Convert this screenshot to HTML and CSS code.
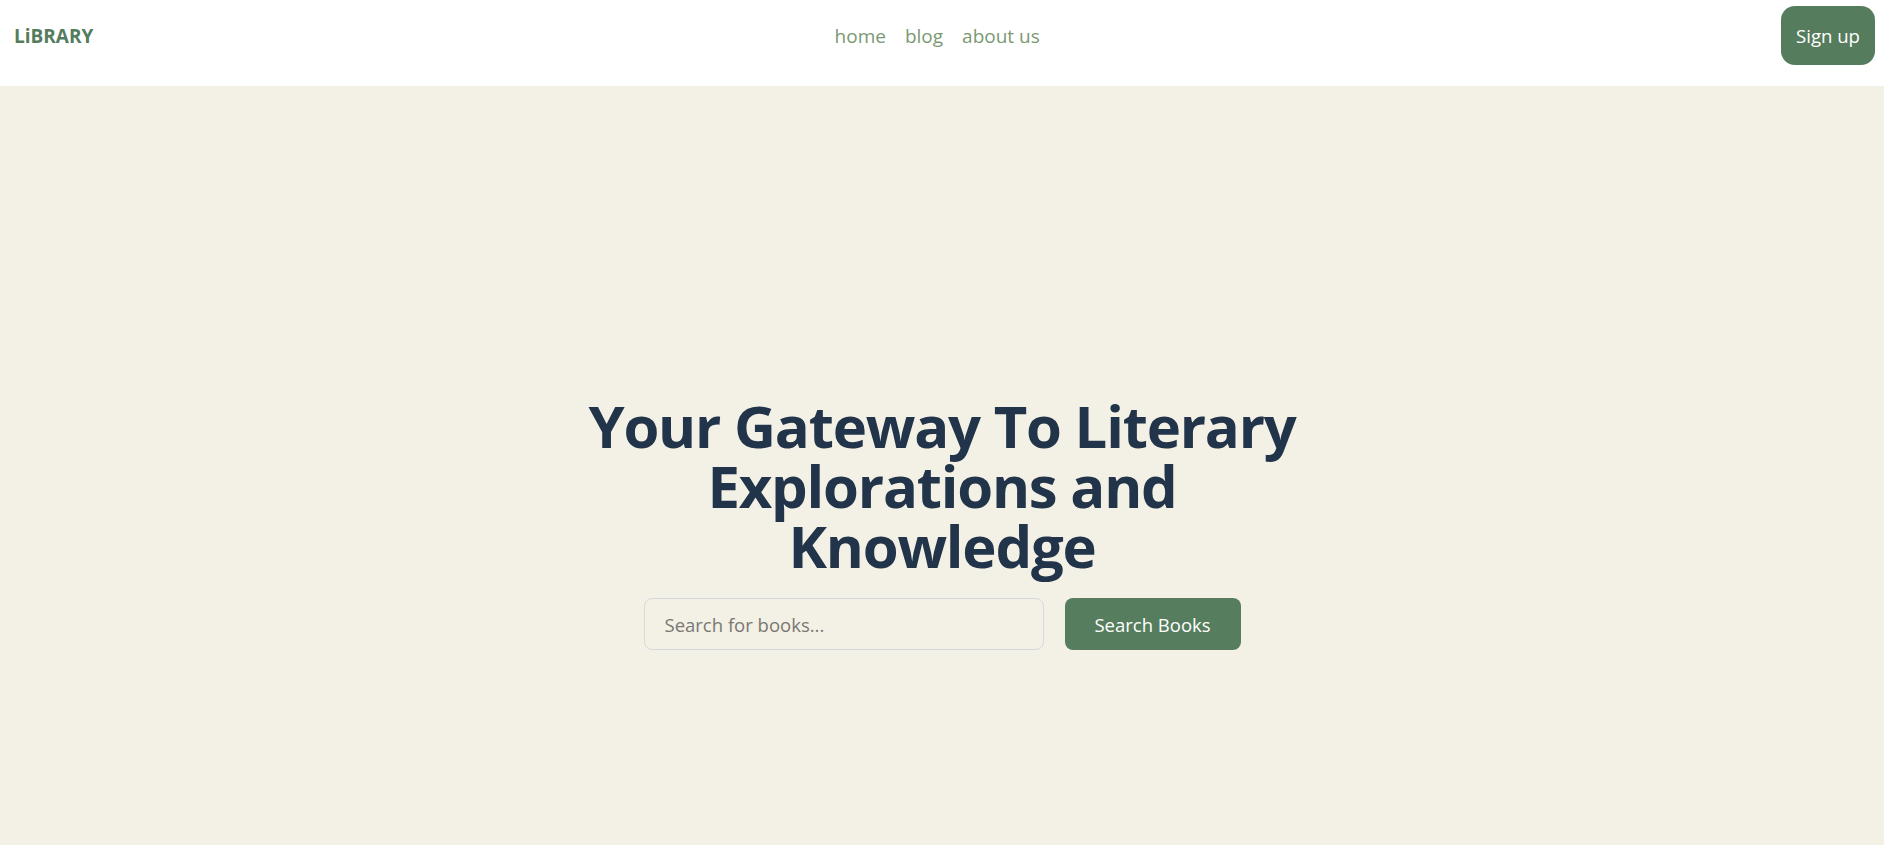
FILE: index.html
```html
<!DOCTYPE html>
<html lang="en">
<head>
<meta charset="utf-8">
<title>Library</title>
<link rel="stylesheet" href="styles.css">
</head>
<body>
  <header class="site-header">
    <a class="logo" href="#">LiBRARY</a>
    <nav class="main-nav">
      <a href="#">home</a>
      <a href="#">blog</a>
      <a href="#">about us</a>
    </nav>
    <button class="signup-btn" type="button">Sign up</button>
  </header>
  <main class="hero">
    <h1 class="hero-title">Your Gateway To Literary Explorations and Knowledge</h1>
    <form class="search-form" onsubmit="return false;">
      <input class="search-input" type="text" placeholder="Search for books...">
      <button class="search-btn" type="submit">Search Books</button>
    </form>
  </main>
</body>
</html>
```

FILE: styles.css
```css
* {
  box-sizing: border-box;
}

html, body {
  margin: 0;
  padding: 0;
}

body {
  font-family: "Open Sans", "Noto Sans", "Liberation Sans", sans-serif;
  background: #f3f0e6;
  min-height: 845px;
}

.site-header {
  height: 86px;
  background: #ffffff;
  display: flex;
  justify-content: space-between;
  align-items: center;
  padding: 6px 9px 21px 14px;
}

.logo {
  font-size: 19px;
  font-weight: 700;
  color: #557c5d;
  text-decoration: none;
}

.main-nav {
  display: flex;
  gap: 19px;
}

.main-nav a {
  font-size: 19px;
  color: #7b9873;
  text-decoration: none;
}

.signup-btn {
  font-family: inherit;
  font-size: 18.6px;
  line-height: 27px;
  color: #ffffff;
  background: #557c5d;
  border: none;
  border-radius: 14px;
  padding: 16px 15px;
  cursor: pointer;
}

.hero {
  display: flex;
  flex-direction: column;
  align-items: center;
  padding-top: 310px;
}

.hero-title {
  margin: 0 0 22px;
  max-width: 768px;
  text-align: center;
  font-size: 58px;
  line-height: 60px;
  font-weight: 700;
  color: #223449;
  letter-spacing: -1.2px;
}

.search-form {
  display: flex;
  gap: 21px;
}

.search-input {
  width: 400px;
  height: 52px;
  padding: 0 20px;
  font-family: inherit;
  font-size: 18.5px;
  color: #333;
  background: #f3f0e6;
  border: 1px solid #d6d8dc;
  border-radius: 8px;
  outline: none;
}

.search-input::placeholder {
  color: #7a7872;
}

.search-btn {
  width: 176px;
  height: 52px;
  font-family: inherit;
  font-size: 18.5px;
  color: #ffffff;
  background: #567d5e;
  border: none;
  border-radius: 8px;
  cursor: pointer;
}
```
